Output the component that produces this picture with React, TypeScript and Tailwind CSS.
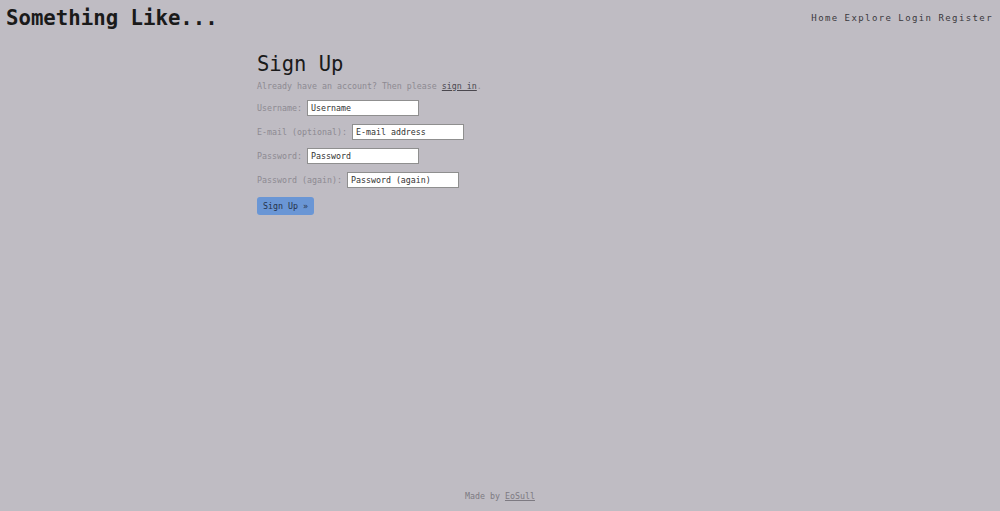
import React from "react";

const mono = { fontFamily: '"DejaVu Sans Mono", "Liberation Mono", monospace' };

function Field({ label, placeholder }: { label: string; placeholder: string }) {
  return (
    <div className="flex items-center h-[16px] mb-[8px]">
      <label className="text-[8.3px] text-[#8d8a92] mr-[5px]">{label}</label>
      <input
        type="text"
        placeholder={placeholder}
        className="w-[112px] h-[16px] bg-white border border-[#8f8f8f] px-[3px] text-[8.3px] text-[#333] placeholder:text-[#333] outline-none"
        style={mono}
      />
    </div>
  );
}

export default function App() {
  return (
    <div className="min-h-screen h-[511px] flex flex-col bg-[#bfbcc3] text-[#1c1c1c]" style={mono}>
      <header className="flex items-center justify-between h-[36px] pl-[6px] pr-[7px]">
        <div className="text-[20.7px] leading-none font-bold text-[#1a1a1a]">Something Like...</div>
        <nav className="flex gap-[6px] text-[9px] tracking-[1.4px] text-[#3a383d] pt-[2px]">
          <a>Home</a>
          <a>Explore</a>
          <a>Login</a>
          <a>Register</a>
        </nav>
      </header>
      <main className="flex-1 pl-[257px] pt-[18px]">
        <h1 className="text-[20.5px] leading-none text-[#1a1a1a] mb-[5px]">Sign Up</h1>
        <p className="text-[8.3px] text-[#8d8a92] mb-[8px]">
          Already have an account? Then please <a className="underline text-[#4a474e]">sign in</a>.
        </p>
        <Field label="Username:" placeholder="Username" />
        <Field label="E-mail (optional):" placeholder="E-mail address" />
        <Field label="Password:" placeholder="Password" />
        <Field label="Password (again):" placeholder="Password (again)" />
        <button className="block mt-[9px] w-[57px] h-[18px] rounded-[3px] bg-[#6a96d5] text-[8.3px] text-[#25324a]" style={mono}>
          Sign Up »
        </button>
      </main>
      <footer className="h-[21px] flex items-start justify-center text-[8.3px] text-[#7d7a82]">
        <span>
          Made by <a className="underline">EoSull</a>
        </span>
      </footer>
    </div>
  );
}
